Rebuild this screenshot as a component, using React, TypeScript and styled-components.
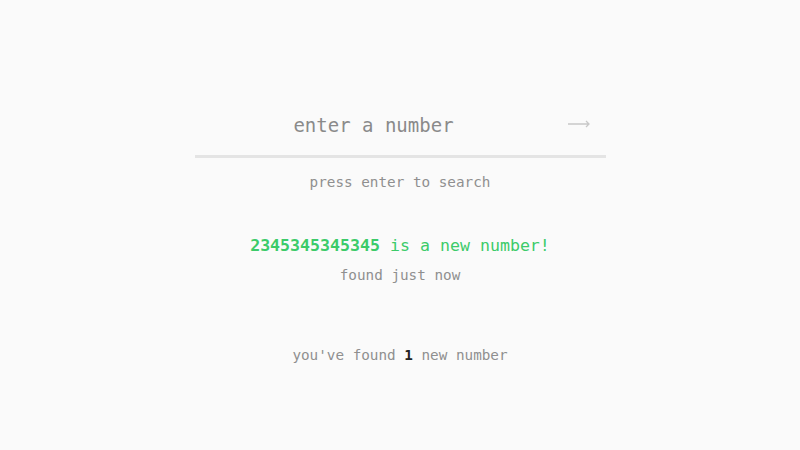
import React from "react";
import styled, { createGlobalStyle } from "styled-components";

const Global = createGlobalStyle`
  html, body { margin: 0; padding: 0; background: #fafafa; }
  body { font-family: "DejaVu Sans Mono", "Liberation Mono", monospace; }
`;

const Page = styled.main`
  height: 450px;
  display: flex;
  flex-direction: column;
  align-items: center;
`;

const SearchBar = styled.form`
  margin-top: 107px;
  width: 411px;
  display: flex;
  align-items: center;
  border-bottom: 3px solid #e4e4e4;
  padding-bottom: 12px;
`;

const NumberInput = styled.input`
  flex: 1;
  min-width: 0;
  border: none;
  outline: none;
  background: transparent;
  text-align: center;
  font-family: inherit;
  font-size: 19px;
  line-height: 36px;
  color: #333;
  padding: 0;
  &::placeholder { color: #8a8a8a; }
`;

const SubmitButton = styled.button`
  width: 53px;
  border: none;
  background: transparent;
  padding: 0 0 2px;
  display: flex;
  justify-content: center;
  align-items: center;
  cursor: pointer;
`;

const Hint = styled.p`
  margin: 16px 0 0;
  font-size: 14.3px;
  color: #8f8f8f;
`;

const Result = styled.section`
  margin-top: 46px;
  display: flex;
  flex-direction: column;
  align-items: center;
  gap: 12px;
`;

const Headline = styled.p`
  margin: 0;
  font-size: 16.6px;
  color: #3ccb69;
`;

const Num = styled.strong`
  font-weight: 700;
`;

const Meta = styled.p<{ $top?: number }>`
  margin: ${(p) => p.$top ?? 0}px 0 0;
  font-size: 14.3px;
  color: #8f8f8f;
`;

const Count = styled.b`
  color: #222;
  font-weight: 700;
`;

export default function App() {
  return (
    <>
      <Global />
      <Page>
        <SearchBar onSubmit={(e) => e.preventDefault()}>
          <NumberInput placeholder="enter a number" />
          <SubmitButton type="submit" aria-label="search">
            <svg width="24" height="10" viewBox="0 0 24 10" fill="none" stroke="#c8c8c8" strokeWidth="1.3">
              <path d="M1 5h21M19 2l3 3-3 3" />
            </svg>
          </SubmitButton>
        </SearchBar>
        <Hint>press enter to search</Hint>
        <Result>
          <Headline>
            <Num>2345345345345</Num> is a new number!
          </Headline>
          <Meta>found just now</Meta>
        </Result>
        <Meta $top={64}>
          you've found <Count>1</Count> new number
        </Meta>
      </Page>
    </>
  );
}
